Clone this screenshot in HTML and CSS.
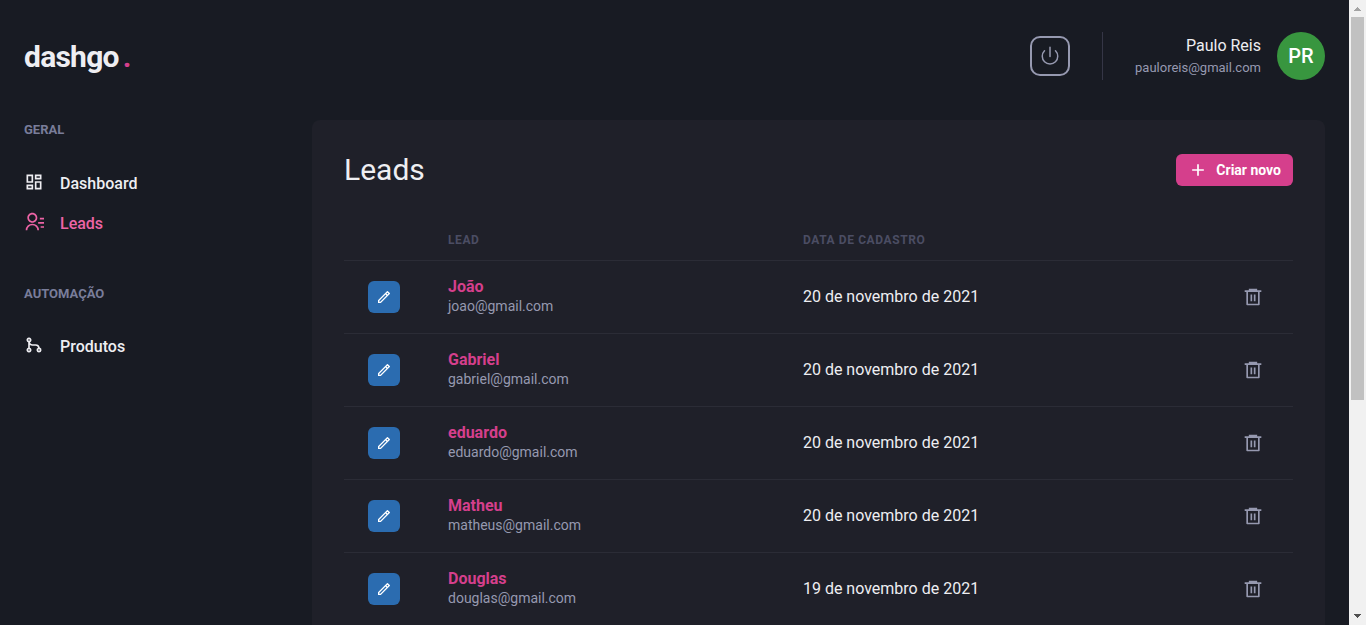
FILE: index.html
```html
<!DOCTYPE html>
<html lang="pt-BR">
<head>
<meta charset="utf-8">
<meta name="viewport" content="width=device-width, initial-scale=1">
<title>dashgo | Leads</title>
<link rel="stylesheet" href="styles.css">
</head>
<body>
<svg class="sprite" aria-hidden="true">
  <symbol id="pencil" viewBox="0 0 24 24"><path d="M15.728 9.686l-1.414-1.414L5 17.586V19h1.414l9.314-9.314zm1.414-1.414l1.414-1.414-1.414-1.414-1.414 1.414 1.414 1.414zM7.242 21H3v-4.243L16.435 3.322a1 1 0 0 1 1.414 0l2.829 2.829a1 1 0 0 1 0 1.414L7.243 21z"/></symbol>
  <symbol id="trash" viewBox="0 0 24 24"><path d="M7 4V2h10v2h5v2h-2v15a1 1 0 0 1-1 1H5a1 1 0 0 1-1-1V6H2V4h5zM6 6v14h12V6H6zm3 3h2v8H9V9zm4 0h2v8h-2V9z"/></symbol>
</svg>
<div class="window">
  <div class="page">
    <header class="header">
      <a class="logo" href="#">dashgo<span class="logo-dot">.</span></a>
      <div class="account">
        <button class="power" type="button" aria-label="Sair">
          <svg class="power-icon" viewBox="0 0 22 22"><path d="M5.5 5.8A7.75 7.75 0 1 0 16.5 5.8M11 2.2v9.2"/></svg>
        </button>
        <div class="profile">
          <div class="profile-text">
            <span class="profile-name">Paulo Reis</span>
            <span class="profile-email">pauloreis@gmail.com</span>
          </div>
          <div class="avatar">PR</div>
        </div>
      </div>
    </header>
    <div class="body">
      <nav class="sidebar">
        <section class="nav-group">
          <h2 class="nav-title">GERAL</h2>
          <a class="nav-link" href="#">
            <svg class="icon" viewBox="0 0 24 24"><path d="M13 21V11h8v10h-8zM3 13V3h8v10H3zm6-2V5H5v6h4zM3 21v-6h8v6H3zm2-2h4v-2H5v2zm10 0h4v-6h-4v6zM13 3h8v6h-8V3zm2 2v2h4V5h-4z"/></svg>
            <span>Dashboard</span>
          </a>
          <a class="nav-link nav-link-active" href="#">
            <svg class="icon" viewBox="0 0 24 24"><path d="M19 7h5v2h-5V7zm-2 5h7v2h-7v-2zm3 5h4v2h-4v-2zM2 22a8 8 0 1 1 16 0h-2a6 6 0 1 0-12 0H2zm8-9c-3.315 0-6-2.685-6-6s2.685-6 6-6 6 2.685 6 6-2.685 6-6 6zm0-2c2.21 0 4-1.79 4-4s-1.79-4-4-4-4 1.79-4 4 1.79 4 4 4z"/></svg>
            <span>Leads</span>
          </a>
        </section>
        <section class="nav-group">
          <h2 class="nav-title">AUTOMAÇÃO</h2>
          <a class="nav-link" href="#">
            <svg class="icon" viewBox="0 0 24 24"><path d="M7.105 8.79A3.001 3.001 0 0 0 10 11h4a5.001 5.001 0 0 1 4.927 4.146A3.001 3.001 0 0 1 18 21a3 3 0 0 1-1.105-5.79A3.001 3.001 0 0 0 14 13h-4a4.978 4.978 0 0 1-3-1v3.17a3.001 3.001 0 1 1-2 0V8.83a3.001 3.001 0 1 1 2.105-.04zM6 7a1 1 0 1 0 0-2 1 1 0 0 0 0 2zm0 12a1 1 0 1 0 0-2 1 1 0 0 0 0 2zm12 0a1 1 0 1 0 0-2 1 1 0 0 0 0 2z"/></svg>
            <span>Produtos</span>
          </a>
        </section>
      </nav>
      <main class="panel">
        <div class="panel-head">
          <h1 class="panel-title">Leads</h1>
          <button class="create" type="button">
            <svg class="icon" viewBox="0 0 24 24"><path d="M11 11V5h2v6h6v2h-6v6h-2v-6H5v-2z"/></svg>
            <span>Criar novo</span>
          </button>
        </div>
        <table class="table">
          <colgroup><col class="col-action"><col class="col-lead"><col><col class="col-action"></colgroup>
          <thead>
            <tr><th></th><th scope="col">LEAD</th><th scope="col">DATA DE CADASTRO</th><th></th></tr>
          </thead>
          <tbody>
            <tr>
              <td><button class="edit" type="button" aria-label="Editar João"><svg class="edit-icon"><use href="#pencil"/></svg></button></td>
              <td><a class="lead-name" href="#">João</a><span class="lead-email">joao@gmail.com</span></td>
              <td>20 de novembro de 2021</td>
              <td><button class="remove" type="button" aria-label="Excluir João"><svg class="icon"><use href="#trash"/></svg></button></td>
            </tr>
            <tr>
              <td><button class="edit" type="button" aria-label="Editar Gabriel"><svg class="edit-icon"><use href="#pencil"/></svg></button></td>
              <td><a class="lead-name" href="#">Gabriel</a><span class="lead-email">gabriel@gmail.com</span></td>
              <td>20 de novembro de 2021</td>
              <td><button class="remove" type="button" aria-label="Excluir Gabriel"><svg class="icon"><use href="#trash"/></svg></button></td>
            </tr>
            <tr>
              <td><button class="edit" type="button" aria-label="Editar eduardo"><svg class="edit-icon"><use href="#pencil"/></svg></button></td>
              <td><a class="lead-name" href="#">eduardo</a><span class="lead-email">eduardo@gmail.com</span></td>
              <td>20 de novembro de 2021</td>
              <td><button class="remove" type="button" aria-label="Excluir eduardo"><svg class="icon"><use href="#trash"/></svg></button></td>
            </tr>
            <tr>
              <td><button class="edit" type="button" aria-label="Editar Matheu"><svg class="edit-icon"><use href="#pencil"/></svg></button></td>
              <td><a class="lead-name" href="#">Matheu</a><span class="lead-email">matheus@gmail.com</span></td>
              <td>20 de novembro de 2021</td>
              <td><button class="remove" type="button" aria-label="Excluir Matheu"><svg class="icon"><use href="#trash"/></svg></button></td>
            </tr>
            <tr>
              <td><button class="edit" type="button" aria-label="Editar Douglas"><svg class="edit-icon"><use href="#pencil"/></svg></button></td>
              <td><a class="lead-name" href="#">Douglas</a><span class="lead-email">douglas@gmail.com</span></td>
              <td>19 de novembro de 2021</td>
              <td><button class="remove" type="button" aria-label="Excluir Douglas"><svg class="icon"><use href="#trash"/></svg></button></td>
            </tr>
          </tbody>
        </table>
      </main>
    </div>
  </div>
  <div class="scrollbar" aria-hidden="true">
    <svg class="arrow arrow-up" viewBox="0 0 17 17" shape-rendering="crispEdges"><path d="M8 7h1v1h1v1h1v1h1v1H5v-1h1V9h1V8h1z"/></svg>
    <div class="track"><div class="thumb"></div></div>
    <svg class="arrow arrow-down" viewBox="0 0 17 17" shape-rendering="crispEdges"><path d="M5 6h7v1h-1v1h-1v1H9v1H8V9H7V8H6V7H5z"/></svg>
  </div>
</div>
</body>
</html>
```
FILE: styles.css
```css
* { box-sizing: border-box; }

body {
  margin: 0;
  background: #181b23;
  color: #eeeef2;
  font-family: Roboto, "Liberation Sans", sans-serif;
  font-size: 16px;
  line-height: 24px;
}

h1, h2 { margin: 0; }
a { color: inherit; text-decoration: none; }
button { margin: 0; padding: 0; border: 0; font: inherit; cursor: pointer; }
svg { display: block; flex: none; fill: currentColor; }

.sprite { display: none; }
.icon { width: 20px; height: 20px; }

.window {
  display: grid;
  grid-template-columns: minmax(0, 1fr) 17px;
  height: 100vh;
}

.page { overflow: hidden; padding: 16px 24px 0; }

.header {
  display: flex;
  align-items: center;
  justify-content: space-between;
  height: 80px;
}

.logo {
  padding-top: 2px;
  font-size: 30px;
  font-weight: 700;
  line-height: 36px;
  letter-spacing: -0.025em;
}
.logo-dot { margin-left: 4px; color: #d53f8c; }

.account { display: flex; align-items: center; gap: 32px; }

.power {
  display: flex;
  align-items: center;
  justify-content: center;
  width: 40px;
  height: 40px;
  border: 2px solid #9699b0;
  border-radius: 10px;
  background: transparent;
  color: #9699b0;
}
.power-icon {
  width: 22px;
  height: 22px;
  fill: none;
  stroke: currentColor;
  stroke-width: 1.5;
  stroke-linecap: round;
}

.profile {
  display: flex;
  align-items: center;
  gap: 16px;
  padding-left: 32px;
  border-left: 1px solid #353646;
}
.profile-text { display: flex; flex-direction: column; text-align: right; }
.profile-name { line-height: 24px; }
.profile-email { color: #9699b0; font-size: 13px; line-height: 20px; }
.avatar {
  display: grid;
  place-items: center;
  width: 48px;
  height: 48px;
  border-radius: 50%;
  background: #38963f;
  color: #fff;
  font-size: 20px;
  font-weight: 500;
}

.body { display: flex; gap: 32px; margin-top: 24px; }

.sidebar {
  display: flex;
  flex: none;
  flex-direction: column;
  gap: 48px;
  width: 256px;
}
.nav-group { display: flex; flex-direction: column; gap: 16px; }
.nav-title {
  margin-bottom: 16px;
  color: #797d9a;
  font-size: 13px;
  font-weight: 700;
  line-height: 1.5;
}
.nav-link { display: flex; align-items: flex-start; gap: 16px; font-weight: 500; }
.nav-link-active { color: #ed64a6; }

.panel {
  flex: 1;
  min-width: 0;
  padding: 32px;
  border-radius: 8px;
  background: #1f2029;
}
.panel-head {
  display: flex;
  align-items: center;
  justify-content: space-between;
  margin-bottom: 32px;
}
.panel-title { font-size: 30px; font-weight: 400; line-height: 36px; }

.create {
  display: flex;
  align-items: center;
  gap: 8px;
  height: 32px;
  padding: 0 12px;
  border-radius: 6px;
  background: #d53f8c;
  color: #fff;
  font-size: 14px;
  font-weight: 700;
  line-height: 17px;
}

.table { width: 100%; table-layout: fixed; border-collapse: collapse; }
.col-action { width: 80px; }
.col-lead { width: 37.4%; }
.table th, .table td {
  padding: 12px 24px;
  border-bottom: 1px solid #2b2c36;
  text-align: left;
}
.table th {
  color: #4b4d63;
  font-size: 12px;
  font-weight: 700;
  line-height: 16px;
  letter-spacing: 0.05em;
}
.table td { padding: 16px 24px; }

.lead-name, .lead-email { display: block; }
.lead-name { color: #d53f8c; font-weight: 700; line-height: 20px; }
.lead-email {
  margin-bottom: 2px;
  color: #9699b0;
  font-size: 14px;
  line-height: 18px;
}

.edit, .remove {
  display: flex;
  align-items: center;
  justify-content: center;
  width: 32px;
  height: 32px;
  border-radius: 6px;
}
.edit { background: #2b6cb0; color: #fff; }
.edit-icon { width: 16px; height: 16px; }
.remove { background: transparent; color: #9699b0; }

.scrollbar {
  display: grid;
  grid-template-rows: 17px 1fr 17px;
  background: #f1f1f1;
}
.arrow { width: 17px; height: 17px; }
.arrow-up { fill: #a3a3a3; }
.arrow-down { fill: #505050; }
.track { padding: 0 2px; }
.thumb { height: 64.8%; background: #c1c1c1; }
```
